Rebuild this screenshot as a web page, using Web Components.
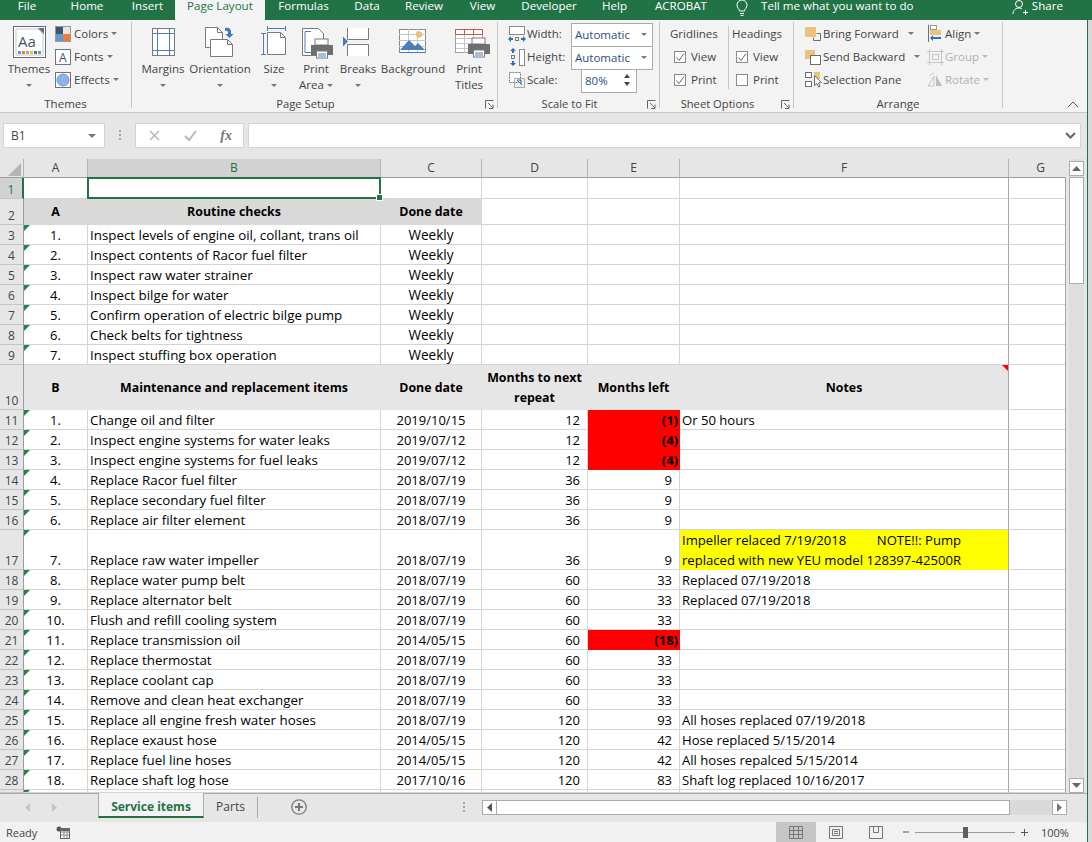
<!DOCTYPE html>
<html>
<head>
<meta charset="utf-8">
<title>Service items</title>
<style>
    html, body { margin: 0; height: 100%; overflow: hidden; background: #d9d9d9; }
    body { font-family: "Open Sans", "Noto Sans", sans-serif; }
    svg { display: block; }
</style>
</head>
<body>
<xl-window>
    <xl-title-bar slot="title"></xl-title-bar>
    <xl-ribbon>
        <xl-group label="Themes" style="width:131px">
            <xl-big label="Themes" caret style="width:48px;margin-left:5px">
                <svg slot="icon" width="48" height="36" viewBox="0 0 48 36">
                    <rect x="8.500" y="2.500" width="32" height="31" fill="#fff" stroke="#5f6b7a"/>
                    <path d="M11 5h22l5 5v21H11z" fill="#fff" stroke="#c8c8c8"/>
                    <path d="M33 4h6v6z" fill="#5f6b7a"/>
                    <text x="13" y="23" font-family="Open Sans" font-size="15" fill="#44546a">Aa</text>
                    <g shape-rendering="crispEdges"><rect x="13" y="27" width="3" height="3" fill="#5b9bd5"/><rect x="17" y="27" width="3" height="3" fill="#ed7d31"/><rect x="21" y="27" width="3" height="3" fill="#a5a5a5"/><rect x="25" y="27" width="3" height="3" fill="#ffc000"/><rect x="29" y="27" width="3" height="3" fill="#4472c4"/><rect x="33" y="27" width="3" height="3" fill="#70ad47"/></g>
                </svg>
            </xl-big>
            <div style="width:76px;margin-left:2px">
                <xl-small label="Colors" caret style="--icon-w:19px;--gap:3px">
                    <svg slot="icon" width="16" height="16" viewBox="0 0 16 16" shape-rendering="crispEdges"><rect x="0" y="0" width="16" height="16" fill="#9a9a9a"/><rect x="1" y="1" width="7" height="7" fill="#44546a"/><rect x="8" y="1" width="7" height="7" fill="#e7e6e6"/><rect x="1" y="8" width="7" height="7" fill="#5b9bd5"/><rect x="8" y="8" width="7" height="7" fill="#ed7d31"/></svg>
                </xl-small>
                <xl-small label="Fonts" caret style="--icon-w:19px;--gap:3px">
                    <svg slot="icon" width="16" height="16" viewBox="0 0 16 16"><rect x=".5" y=".5" width="15" height="15" fill="#fff" stroke="#6b7685"/><text x="4" y="13" font-family="Open Sans" font-size="12" fill="#2f5597">A</text><path d="M5 13l1-3" stroke="#ed7d31"/></svg>
                </xl-small>
                <xl-small label="Effects" caret style="--icon-w:19px;--gap:3px">
                    <svg slot="icon" width="16" height="16" viewBox="0 0 16 16"><rect x=".5" y=".5" width="15" height="15" fill="#fff" stroke="#6b7685"/><circle cx="8" cy="8" r="6" fill="#8fb2e3" stroke="#6e97d2"/></svg>
                </xl-small>
            </div>
        </xl-group>
        <xl-group label="Page Setup" launcher style="padding-left:7px;box-sizing:border-box;width:366px">
            <xl-big label="Margins" caret style="width:48px">
                <svg slot="icon" width="48" height="36" viewBox="0 0 48 36"><rect x="13.500" y="4.500" width="22" height="27" fill="#fff" stroke="#7a7a7a"/><path d="M18.500 5v26M30.500 5v26M14 9.500h21M14 26.500h21" stroke="#4a7ebb" fill="none"/></svg>
            </xl-big>
            <xl-big label="Orientation" caret style="width:66px">
                <svg slot="icon" width="66" height="36" viewBox="0 0 66 36"><path d="M18.500 3.500h12l5 5v15h-17z" fill="#fff" stroke="#7a7a7a"/><path d="M23.500 15.500h17l5 5v12h-22z" fill="#fff" stroke="#7a7a7a"/><path d="M40.500 15.500v5h5M30.500 3.500v5h5" fill="none" stroke="#7a7a7a"/><path d="M38 4c4-1 6 1 6 4v2h2.500l-4 4-4-4H41V8c0-1-1-1.500-3-1z" fill="#3f76b5"/></svg>
            </xl-big>
            <xl-big label="Size" caret style="width:42px">
                <svg slot="icon" width="42" height="36" viewBox="0 0 42 36"><path d="M14.500 8.500h13l5 5v17h-18z" fill="#fff" stroke="#7a7a7a"/><path d="M27.500 8.500v5h5" fill="none" stroke="#7a7a7a"/><path d="M14 4.500h19M14.500 2v5M32.500 2v5M10.500 9v22M8 9.500h5M8 30.500h5" stroke="#4a7ebb" fill="none"/></svg>
            </xl-big>
            <xl-big label="Print" label2="Area" caret2 style="width:42px">
                <svg slot="icon" width="42" height="36" viewBox="0 0 42 36"><path d="M7.500 4.500h16l5 5v22h-21z" fill="#fff" stroke="#7a7a7a"/><path d="M16 7.500h-6v21h6" fill="none" stroke="#4a7ebb"/><rect x="20" y="15" width="13" height="6" fill="#fff" stroke="#7a7a7a"/><path d="M16 21h21a1 1 0 0 1 1 1v9H33v3H21v-3h-5z" fill="#6e6e6e"/><rect x="21.500" y="27" width="11" height="7" fill="#fff" stroke="#7a7a7a"/><path d="M23 30h8M23 32h8" stroke="#4a7ebb"/></svg>
            </xl-big>
            <xl-big label="Breaks" caret style="width:42px">
                <svg slot="icon" width="42" height="36" viewBox="0 0 42 36"><path d="M10.500 4v11.500h21V4M10.500 32V20.500h21V32" fill="#fff" stroke="#7a7a7a"/><path d="M6 13l5 5-5 5z" fill="#4a7ebb" transform="translate(0 -.5)"/></svg>
            </xl-big>
            <xl-big label="Background" style="width:68px">
                <svg slot="icon" width="68" height="36" viewBox="0 0 68 36"><rect x="20.500" y="5.500" width="26" height="23" fill="#fff" stroke="#8a8a8a"/><path d="M20 10.500h27M20 16.500h27M20 22.500h27M29.500 5v24M38.500 5v24" stroke="#c6c6c6"/><circle cx="40" cy="10.500" r="3.200" fill="#e9c27e"/><path d="M21 26l9-10 6 6 3-3 7 7z" fill="#4a7ebb"/><path d="M21 28.500h25" stroke="#4a7ebb"/></svg>
            </xl-big>
            <xl-big label="Print" label2="Titles" style="width:44px">
                <svg slot="icon" width="44" height="36" viewBox="0 0 44 36"><rect x="8.500" y="5.500" width="27" height="23" fill="#fff" stroke="#a0a0a0"/><path d="M9 14.500h26M9 19.500h26M9 24.500h26M17.500 10v19M26.500 10v19" stroke="#c6c6c6"/><path d="M8.500 5.500h27v5h-27zM17.500 5.500v5M26.500 5.500v5" fill="none" stroke="#d0553a"/><rect x="25" y="14" width="13" height="6" fill="#fff" stroke="#7a7a7a"/><path d="M21 20h21a1 1 0 0 1 1 1v9h-5v3H26v-3h-5z" fill="#6e6e6e"/><rect x="26.500" y="26" width="11" height="7" fill="#fff" stroke="#7a7a7a"/><path d="M28 29h8M28 31h8" stroke="#4a7ebb"/></svg>
            </xl-big>
        </xl-group>
        <xl-group label="Scale to Fit" launcher style="padding-left:10px;box-sizing:border-box;width:162px">
            <div>
                <xl-fit-row label="Width:" value="Automatic" menu>
                    <svg slot="icon" width="18" height="18" viewBox="0 0 18 18"><rect x="1.500" y="1.500" width="15" height="8" fill="#fff" stroke="#8a8a8a"/><rect x="7.500" y="12.500" width="3" height="3" fill="none" stroke="#7a7a7a"/><path d="M0 14l3-3v2h2v2H3v2zM18 14l-3-3v2h-2v2h2v2z" fill="#2f6fb7"/></svg>
                </xl-fit-row>
                <xl-fit-row label="Height:" value="Automatic" menu>
                    <svg slot="icon" width="18" height="18" viewBox="0 0 18 18"><rect x="11.500" y="1.500" width="5" height="16" fill="#fff" stroke="#8a8a8a"/><path d="M5 0l3 3H6v2H4V3H2zM5 18l3-3H6v-2H4v2H2z" fill="#2f6fb7"/><rect x="3.500" y="7.500" width="3" height="3" fill="none" stroke="#7a7a7a"/></svg>
                </xl-fit-row>
                <xl-fit-row label="Scale:" value="80%" spin>
                    <svg slot="icon" width="18" height="18" viewBox="0 0 18 18"><rect x="1.500" y="1.500" width="11" height="10" fill="#fff" stroke="#7a7a7a" stroke-dasharray="2 1"/><path d="M6.500 7.500h10v9h-10z" fill="none" stroke="#a8a8a8"/><path d="M9 9h4v4M9 9l5 5" fill="none" stroke="#2f6fb7"/></svg>
                </xl-fit-row>
            </div>
        </xl-group>
        <xl-group label="Sheet Options" launcher style="box-sizing:border-box;width:134px;padding-left:10px">
            <xl-check-col title="Gridlines" style="width:58px;border-right:1px solid #c6c6c6;margin:4px 0 6px">
                <xl-check label="View" checked></xl-check>
                <xl-check label="Print" checked></xl-check>
            </xl-check-col>
            <xl-check-col title="Headings" style="width:60px;margin:4px 0 6px 3px">
                <xl-check label="View" checked></xl-check>
                <xl-check label="Print"></xl-check>
            </xl-check-col>
        </xl-group>
        <xl-group label="Arrange" style="box-sizing:border-box;width:209px;padding-left:11px">
            <div style="width:122px">
                <xl-small label="Bring Forward" caret style="--icon-w:18px;--gap:9px">
                    <svg slot="icon" width="16" height="16" viewBox="0 0 16 16"><rect x="0" y="1" width="11" height="10" fill="#eac27b"/><path d="M11.500 7.500h4v7h-7v-3" fill="none" stroke="#6e6e6e"/></svg>
                </xl-small>
                <xl-small label="Send Backward" caret style="--icon-w:18px;--gap:9px">
                    <svg slot="icon" width="16" height="16" viewBox="0 0 16 16"><rect x="0" y="1" width="10" height="9" fill="#eac27b"/><rect x="5.500" y="6.500" width="10" height="9" fill="#fff" stroke="#6e6e6e"/></svg>
                </xl-small>
                <xl-small label="Selection Pane" style="--icon-w:18px">
                    <svg slot="icon" width="17" height="17" viewBox="0 0 17 17"><rect x="9" y="1" width="6" height="7" fill="#eac27b"/><rect x=".5" y="1.500" width="6" height="5" fill="#fff" stroke="#6e6e6e"/><rect x=".5" y="10.500" width="6" height="5" fill="#fff" stroke="#6e6e6e"/><path d="M9.500 4.500v10l2.500-2 1.500 3.500 1.500-.5-1.500-3.500 3-.5z" fill="#fff" stroke="#6e6e6e"/></svg>
                </xl-small>
            </div>
            <div style="width:70px">
                <xl-small label="Align" caret style="--icon-w:18px;--gap:3px">
                    <svg slot="icon" width="16" height="17" viewBox="0 0 16 17"><path d="M1.500 0v17" stroke="#6e6e6e"/><rect x="3.500" y=".5" width="6" height="4" fill="#fff" stroke="#9a9a9a"/><rect x="3" y="5" width="11" height="5" fill="#eac27b"/><path d="M3 13l3-3v2h8v2H6v2z" fill="#2f6fb7"/></svg>
                </xl-small>
                <xl-small label="Group" caret disabled style="--icon-w:18px;--gap:3px">
                    <svg slot="icon" width="17" height="16" viewBox="0 0 17 16"><g fill="none" stroke="#c4c4c4"><rect x="2.500" y="2.500" width="12" height="11"/><rect x="5.500" y="5.500" width="6" height="5"/><path d="M0 2.500h4M2.500 0v4M13 2.500h4M14.500 0v4M0 13.500h4M2.500 12v4M13 13.500h4M14.500 12v4"/></g></svg>
                </xl-small>
                <xl-small label="Rotate" caret disabled style="--icon-w:18px;--gap:3px">
                    <svg slot="icon" width="16" height="16" viewBox="0 0 16 16"><path d="M1 14l6-10v10z" fill="none" stroke="#c4c4c4"/><path d="M9 3v11h6z" fill="#bdbdbd"/><path d="M3 4c1-2 2-2 4-3" fill="none" stroke="#c4c4c4"/></svg>
                </xl-small>
            </div>
        </xl-group>
    </xl-ribbon>
    <xl-formula-bar cell="B1"></xl-formula-bar>
    <xl-sheet></xl-sheet>
    <xl-sheet-tabs></xl-sheet-tabs>
    <xl-status-bar></xl-status-bar>
</xl-window>

<script>
class XlWindow extends HTMLElement {
    constructor() {
        super();
        this.attachShadow({ mode: 'open' });
        this.shadowRoot.innerHTML = `
            <style>
                :host { display: block; width: 1092px; height: 842px; overflow: hidden; color: #444; }
                .main { width: 1087px; border-right: 1px solid #217346; background: #f1f1f1; height: 822px; }
            </style>
            <slot name="title"></slot>
            <div class="main"><slot></slot></div>
        `;
    }
}
customElements.define('xl-window', XlWindow);

class XlTitleBar extends HTMLElement {
    constructor() {
        super();
        this.attachShadow({ mode: 'open' });
        const tabs = [['File', 54], ['Home', 66], ['Insert', 55], ['Page Layout', 90], ['Formulas', 77], ['Data', 50],
            ['Review', 64], ['View', 53], ['Developer', 80], ['Help', 51], ['ACROBAT', 82]];
        const tabHtml = tabs.map(([name, w]) =>
            `<span class="tab ${name === 'Page Layout' ? 'active' : ''}" style="width:${w}px">${name}</span>`).join('');
        this.shadowRoot.innerHTML = `
            <style>
                :host { display: flex; height: 20px; background: #217346; color: #fff; font-size: 11.6px; line-height: 11px; overflow: hidden; }
                .tab { display: block; text-align: center; flex: none; }
                .active { background: #f3f3f3; color: #217346; height: 20px; }
                .bulb { margin: 0 0 0 13px; flex: none; }
                .tell { margin-left: 12px; flex: none; }
                .spacer { flex: 1; }
                .share { margin-right: 29px; margin-left: 4px; }
            </style>
            ${tabHtml}
            <svg class="bulb" width="14" height="16" viewBox="0 0 14 16" fill="none" stroke="#fff"><path d="M4.500 11c0-2-2.500-3-2.500-6a5 5 0 0 1 10 0c0 3-2.500 4-2.500 6zM5 13.500h4M5.500 15.500h3"/></svg>
            <span class="tell">Tell me what you want to do</span>
            <span class="spacer"></span>
            <svg width="16" height="16" viewBox="0 0 16 16" fill="none" stroke="#fff" style="flex:none"><circle cx="7" cy="4" r="3.500"/><path d="M1 14c0-4 3-6 6-6 1 0 2 .2 3 1M11 12.500h5M13.500 10v5"/></svg>
            <span class="share">Share</span>
        `;
    }
}
customElements.define('xl-title-bar', XlTitleBar);

class XlRibbon extends HTMLElement {
    constructor() {
        super();
        this.attachShadow({ mode: 'open' });
        this.shadowRoot.innerHTML = `
            <style>
                :host { display: flex; position: relative; height: 93px; box-sizing: border-box; padding-top: 2px; background: #f3f3f3;
                    border-bottom: 1px solid #c8c8c8; font-size: 11.5px; color: #444; }
                .collapse { position: absolute; left: 1067px; top: 81px; }
            </style>
            <slot></slot>
            <svg class="collapse" width="12" height="7" viewBox="0 0 12 7" fill="none" stroke="#555"><path d="M1 6l5-5 5 5"/></svg>
        `;
    }
}
customElements.define('xl-ribbon', XlRibbon);

class XlGroup extends HTMLElement {
    constructor() {
        super();
        this.attachShadow({ mode: 'open' });
        const launcher = this.hasAttribute('launcher') ? `
            <svg class="launcher" width="9" height="9" viewBox="0 0 9 9" fill="none" stroke="#666"><path d="M.5 8.500v-8h8M3 3l5 5M8 4.500v4H4"/></svg>` : '';
        this.shadowRoot.innerHTML = `
            <style>
                :host { display: block; position: relative; flex: none; height: 86px; border-right: 1px solid #c6c6c6; }
                :host([launcher]) .label { right: 18px; font-size: 11.2px; }
                .body { display: flex; height: 73px; }
                .label { position: absolute; left: 0; right: 0; top: 74px; text-align: center; line-height: 16px; }
                .launcher { position: absolute; right: 3px; top: 78px; }
            </style>
            <div class="body"><slot></slot></div>
            <div class="label">${this.getAttribute('label')}</div>
            ${launcher}
        `;
    }
}
customElements.define('xl-group', XlGroup);

class XlBig extends HTMLElement {
    constructor() {
        super();
        this.attachShadow({ mode: 'open' });
        const label2 = this.getAttribute('label2');
        let second = '';
        if (label2) second = `<div class="line">${label2}${this.hasAttribute('caret2') ? '<i class="caret side"></i>' : ''}</div>`;
        else if (this.hasAttribute('caret')) second = '<div class="line"><i class="caret"></i></div>';
        this.shadowRoot.innerHTML = `
            <style>
                :host { display: block; flex: none; text-align: center; white-space: nowrap; }
                .icon { height: 36px; margin: 2px 0 1px; }
                .line { height: 16px; line-height: 16px; }
                .caret { display: inline-block; width: 0; height: 0; border: 3px solid transparent; border-top: 3px solid #777; border-bottom: 0; vertical-align: middle; }
                .side { margin-left: 3px; }
            </style>
            <div class="icon"><slot name="icon"></slot></div>
            <div class="line">${this.getAttribute('label')}</div>
            ${second}
        `;
    }
}
customElements.define('xl-big', XlBig);

class XlSmall extends HTMLElement {
    constructor() {
        super();
        this.attachShadow({ mode: 'open' });
        const caret = this.hasAttribute('caret') ? '<i class="caret"></i>' : '';
        this.shadowRoot.innerHTML = `
            <style>
                :host { display: flex; align-items: center; height: 23px; white-space: nowrap; }
                :host([disabled]) { color: #b1b1b1; }
                .icon { width: var(--icon-w, 18px); flex: none; }
                .caret { width: 0; height: 0; margin-left: var(--gap, 3px); border: 3px solid transparent; border-top: 3px solid #777; border-bottom: 0; }
                :host([disabled]) .caret { border-top-color: #bbb; }
            </style>
            <div class="icon"><slot name="icon"></slot></div>
            <span>${this.getAttribute('label')}</span>
            ${caret}
        `;
    }
}
customElements.define('xl-small', XlSmall);

class XlFitRow extends HTMLElement {
    constructor() {
        super();
        this.attachShadow({ mode: 'open' });
        const spin = this.hasAttribute('spin');
        const right = spin
            ? '<svg class="spin" width="8" height="14" viewBox="0 0 8 14" fill="#444"><path d="M4 1l3 4H1zM4 13l3-4H1z"/></svg>'
            : '<i class="caret"></i>';
        this.shadowRoot.innerHTML = `
            <style>
                :host { display: flex; align-items: center; height: 23px; white-space: nowrap; }
                .icon { width: 19px; flex: none; }
                .name { width: 44px; flex: none; }
                .box { display: flex; align-items: center; justify-content: space-between; box-sizing: border-box; height: 24px; width: 82px;
                    padding: 0 5px 2px 3px; align-self: flex-start; margin-top: 1px; background: #fff; border: 1px solid #ababab; color: #2b4f7d; }
                .spinbox { width: 56px; margin-left: 10px; }
                .caret { width: 0; height: 0; border: 3px solid transparent; border-top: 3px solid #777; border-bottom: 0; }
            </style>
            <div class="icon"><slot name="icon"></slot></div>
            <span class="name">${this.getAttribute('label')}</span>
            <div class="box ${spin ? 'spinbox' : ''}"><span>${this.getAttribute('value')}</span>${right}</div>
        `;
    }
}
customElements.define('xl-fit-row', XlFitRow);

class XlCheckCol extends HTMLElement {
    constructor() {
        super();
        this.attachShadow({ mode: 'open' });
        this.shadowRoot.innerHTML = `
            <style>
                :host { display: block; flex: none; }
                .head { height: 23px; line-height: 23px; margin-top: -4px; }
            </style>
            <div class="head">${this.getAttribute('title')}</div>
            <slot></slot>
        `;
        this.removeAttribute('title');
    }
}
customElements.define('xl-check-col', XlCheckCol);

class XlCheck extends HTMLElement {
    constructor() {
        super();
        this.attachShadow({ mode: 'open' });
        const tick = this.hasAttribute('checked') ? '<path d="M2.500 6.500l2.500 3 5-7" fill="none" stroke="#666"/>' : '';
        this.shadowRoot.innerHTML = `
            <style>
                :host { display: flex; align-items: center; height: 23px; padding-left: 4px; }
                svg { display: block; margin-right: 5px; flex: none; }
            </style>
            <svg width="12" height="12" viewBox="0 0 12 12"><rect x=".5" y=".5" width="11" height="11" fill="#fff" stroke="#8a8a8a"/>${tick}</svg>
            <span>${this.getAttribute('label')}</span>
        `;
    }
}
customElements.define('xl-check', XlCheck);

class XlFormulaBar extends HTMLElement {
    constructor() {
        super();
        this.attachShadow({ mode: 'open' });
        this.shadowRoot.innerHTML = `
            <style>
                :host { display: flex; align-items: flex-start; height: 46px; box-sizing: border-box; padding: 10px 0 0 3px; background: #e6e6e6; font-size: 12px; color: #444; }
                .box { box-sizing: border-box; height: 25px; background: #fff; border: 1px solid #d4d4d4; display: flex; align-items: center; }
                .name { width: 102px; padding: 0 8px 0 7px; justify-content: space-between; }
                .caret { width: 0; height: 0; border: 4px solid transparent; border-top: 4px solid #777; border-bottom: 0; }
                .dots { width: 30px; display: flex; flex-direction: column; align-items: center; gap: 2px; padding-top: 7px; }
                .dots i { width: 2px; height: 2px; background: #a6a6a6; }
                .btns { width: 109px; justify-content: space-between; padding: 0 11px 0 13px; }
                .fx { font: italic bold 14px "Liberation Serif", serif; color: #777; }
                .input { width: 833px; margin-left: 4px; justify-content: flex-end; padding-right: 4px; }
            </style>
            <div class="box name"><span>${this.getAttribute('cell')}</span><i class="caret"></i></div>
            <div class="dots"><i></i><i></i><i></i></div>
            <div class="box btns">
                <svg width="11" height="11" viewBox="0 0 11 11" stroke="#b8b8b8" stroke-width="1.500" fill="none"><path d="M1 1l9 9M10 1l-9 9"/></svg>
                <svg width="13" height="11" viewBox="0 0 13 11" stroke="#b8b8b8" stroke-width="2" fill="none"><path d="M1 6l4 4 7-9"/></svg>
                <span class="fx">fx</span>
            </div>
            <div class="box input">
                <svg width="11" height="7" viewBox="0 0 11 7" fill="none" stroke="#666" stroke-width="2"><path d="M1 1l4.500 4.500L10 1"/></svg>
            </div>
        `;
    }
}
customElements.define('xl-formula-bar', XlFormulaBar);

const COLUMNS = ['A', 'B', 'C', 'D', 'E', 'F', 'G'];
const ROW_HEIGHTS = [21, 26, 20, 20, 20, 20, 20, 20, 20, 45, 20, 20, 20, 20, 20, 20, 40,
    20, 20, 20, 20, 20, 20, 20, 20, 20, 20, 20, 3];

// number, item, done date, months to repeat, months left, notes
const ROUTINE = [
    ['1.', 'Inspect levels of engine oil, collant, trans oil'],
    ['2.', 'Inspect contents of Racor fuel filter'],
    ['3.', 'Inspect raw water strainer'],
    ['4.', 'Inspect bilge for water'],
    ['5.', 'Confirm operation of electric bilge pump'],
    ['6.', 'Check belts for tightness'],
    ['7.', 'Inspect stuffing box operation']
];
const ITEMS = [
    ['1.', 'Change oil and filter', '2019/10/15', 12, '(1)', 'Or 50 hours'],
    ['2.', 'Inspect engine systems for water leaks', '2019/07/12', 12, '(4)', ''],
    ['3.', 'Inspect engine systems for fuel leaks', '2019/07/12', 12, '(4)', ''],
    ['4.', 'Replace Racor fuel filter', '2018/07/19', 36, 9, ''],
    ['5.', 'Replace secondary fuel filter', '2018/07/19', 36, 9, ''],
    ['6.', 'Replace air filter element', '2018/07/19', 36, 9, ''],
    ['7.', 'Replace raw water impeller', '2018/07/19', 36, 9, 'Impeller relaced 7/19/2018         NOTE!!: Pump replaced with new YEU model 128397-42500R'],
    ['8.', 'Replace water pump belt', '2018/07/19', 60, 33, 'Replaced 07/19/2018'],
    ['9.', 'Replace alternator belt', '2018/07/19', 60, 33, 'Replaced 07/19/2018'],
    ['10.', 'Flush and refill cooling system', '2018/07/19', 60, 33, ''],
    ['11.', 'Replace transmission oil', '2014/05/15', 60, '(18)', ''],
    ['12.', 'Replace thermostat', '2018/07/19', 60, 33, ''],
    ['13.', 'Replace coolant cap', '2018/07/19', 60, 33, ''],
    ['14.', 'Remove and clean heat exchanger', '2018/07/19', 60, 33, ''],
    ['15.', 'Replace all engine fresh water hoses', '2018/07/19', 120, 93, 'All hoses replaced 07/19/2018'],
    ['16.', 'Replace exaust hose', '2014/05/15', 120, 42, 'Hose replaced 5/15/2014'],
    ['17.', 'Replace fuel line hoses', '2014/05/15', 120, 42, 'All hoses repalced 5/15/2014'],
    ['18.', 'Replace shaft log hose', '2017/10/16', 120, 83, 'Shaft log replaced 10/16/2017']
];

class XlSheet extends HTMLElement {
    constructor() {
        super();
        this.attachShadow({ mode: 'open' });
        this.shadowRoot.innerHTML = `
            <style>
                :host { display: flex; height: 634px; background: #e6e6e6; font-size: 13px; color: #000; }
                .grid { position: relative; flex: none; width: 1066px; height: 634px; overflow: hidden; display: grid; background: #fff;
                    grid-template-columns: 24px 64px 293px 101px 106px 92px 329px 64px;
                    grid-template-rows: 19px ${ROW_HEIGHTS.map(h => h + 'px').join(' ')}; }
                .grid::after { content: ""; position: absolute; left: 1065px; top: 19px; bottom: 0; width: 1px; background: #a6a6a6; }
                .c { position: relative; box-sizing: border-box; display: flex; align-items: flex-end; min-width: 0; overflow: hidden;
                    border-right: 1px solid #d4d4d4; border-bottom: 1px solid #d4d4d4; line-height: 20px; white-space: pre-wrap; }
                .c > span { display: block; width: 100%; margin-bottom: -1px; }
                .fl { padding-left: 2px; }
                .item { font-size: 13.35px; }
                .wk { font-size: 13.6px; }
                .nt { font-size: 13.1px; }
                .ct { text-align: center; }
                .rt { text-align: right; padding-right: 7px; }
                .neg { padding-right: 1px; font-weight: bold; }
                .mid { align-items: center; font-weight: bold; font-size: 12.4px; }
                .f2 { background: #d9d9d9; border-color: #d9d9d9; }
                .f10 { background: #e7e6e6; border-color: #e7e6e6; }
                .red { background: #ff0000; border-color: #ff0000; }
                .yel { background: #ffff00; border-color: #ffff00; }
                .lastf { border-right-color: #a6a6a6; }
                .tri::before { content: ""; position: absolute; left: 0; top: 0; border: 3px solid transparent; border-left: 3px solid #1e8449; border-top: 3px solid #1e8449; }
                .note::after { content: ""; position: absolute; right: 0; top: 0; border: 3px solid transparent; border-right: 3px solid #ff0000; border-top: 3px solid #ff0000; }
                .hd { background: #e6e6e6; color: #444; font-size: 12px; border-right-color: #b4b4b4; border-bottom-color: #9c9c9c; justify-content: center; align-items: center; line-height: 16px; }
                .hd > span { margin: 0; text-align: center; }
                .rh { align-items: flex-end; border-right-color: #9c9c9c; border-bottom-color: #c4c4c4; }
                .rh > span { line-height: 16px; }
                .sel { background: #d2d2d2; color: #217346; }
                .rowsel { border-right: 2px solid #217346; }
                .corner { position: relative; }
                .corner svg { position: absolute; left: 8px; top: 4px; }
                .cursor { position: absolute; left: 87px; top: 18px; width: 294px; height: 22px; box-sizing: border-box; border: 2px solid #217346; }
                .cursor i { position: absolute; right: -4px; bottom: -4px; width: 5px; height: 5px; background: #217346; border: 1px solid #fff; }
                .scroll { flex: none; width: 15px; margin-left: 3px; padding-top: 2px; display: flex; flex-direction: column; background: #dedede; height: 634px; box-sizing: border-box; }
                .btn { height: 15px; box-sizing: border-box; background: #fff; border: 1px solid #ababab; display: flex; align-items: center; justify-content: center; flex: none; }
                .thumb { height: 107px; box-sizing: border-box; background: #fff; border: 1px solid #ababab; flex: none; margin-top: 1px; }
                .track { flex: 1; }
            </style>
            <div class="grid">${this.renderCells()}<div class="cursor"><i></i></div></div>
            <div class="scroll">
                <div class="btn"><svg width="9" height="5" viewBox="0 0 9 5" fill="#666"><path d="M4.500 0L9 5H0z"/></svg></div>
                <div class="thumb"></div>
                <div class="track"></div>
                <div class="btn"><svg width="9" height="5" viewBox="0 0 9 5" fill="#666"><path d="M4.500 5L9 0H0z"/></svg></div>
            </div>
        `;
    }

    cell(text, cls) {
        return `<div class="c ${cls}"><span>${text}</span></div>`;
    }

    renderRow(rowNum, values) {
        const [a, b, c, d, e, f] = values;
        let html = this.cell(a, 'ct tri');
        html += this.cell(b || '', 'fl item');
        html += this.cell(c || '', c === 'Weekly' ? 'ct wk' : 'ct');
        html += this.cell(d === undefined ? '' : d, 'rt');
        const neg = typeof e === 'string';
        html += this.cell(e === undefined ? '' : e, neg ? 'rt neg red' : 'rt');
        html += this.cell(f || '', 'fl nt lastf' + (rowNum === 17 ? ' yel' : ''));
        html += this.cell('', '');
        return html;
    }

    renderCells() {
        const corner = '<div class="c hd corner"><svg width="13" height="13" viewBox="0 0 13 13"><path d="M13 0v13H0z" fill="#b4b4b4"/></svg></div>';
        let html = corner + COLUMNS.map(col => this.cell(col, 'hd' + (col === 'B' ? ' sel' : ''))).join('');

        const rowHead = (n) => this.cell(n, 'hd rh' + (n === 1 ? ' sel rowsel' : ''));

        html += rowHead(1) + this.cell('', '') + this.cell('', '') + this.cell('', '') + this.cell('', '') + this.cell('', '') + this.cell('', 'lastf') + this.cell('', '');

        html += rowHead(2) + this.cell('A', 'ct mid f2') + this.cell('Routine checks', 'ct mid f2') + this.cell('Done date', 'ct mid f2')
            + this.cell('', '') + this.cell('', '') + this.cell('', 'lastf') + this.cell('', '');

        ROUTINE.forEach((row, i) => {
            html += rowHead(i + 3) + this.renderRow(i + 3, [row[0], row[1], 'Weekly']);
        });

        html += rowHead(10);
        ['B', 'Maintenance and replacement items', 'Done date', 'Months to next repeat', 'Months left', 'Notes'].forEach((t, i) => {
            html += this.cell(t, 'ct mid f10' + (i === 5 ? ' lastf note' : ''));
        });
        html += this.cell('', '');

        ITEMS.forEach((row, i) => {
            html += rowHead(i + 11) + this.renderRow(i + 11, row);
        });

        html += this.cell('', 'hd rh') + this.cell('', 'tri') + this.cell('', '') + this.cell('', '') + this.cell('', '') + this.cell('', '') + this.cell('', 'lastf') + this.cell('', '');
        return html;
    }
}
customElements.define('xl-sheet', XlSheet);

class XlSheetTabs extends HTMLElement {
    constructor() {
        super();
        this.attachShadow({ mode: 'open' });
        this.shadowRoot.innerHTML = `
            <style>
                :host { display: flex; height: 29px; box-sizing: border-box; background: #e6e6e6; border-top: 1px solid #ababab; font-size: 12px; color: #444; }
                .nav { width: 98px; flex: none; display: flex; align-items: center; gap: 22px; padding: 0 0 1px 25px; box-sizing: border-box; }
                .tab { height: 24px; box-sizing: border-box; display: flex; align-items: center; justify-content: center; flex: none; margin-top: -1px; }
                .on { width: 106px; background: #f3f3f3; color: #217346; font-weight: bold; border-left: 1px solid #ababab; border-right: 1px solid #ababab; border-bottom: 2px solid #217346; height: 25px; padding-top: 3px; }
                .off { width: 54px; border-right: 1px solid #ababab; margin-top: 3px; height: 21px; padding-bottom: 2px; }
                .plus { margin: 5px 0 0 33px; flex: none; }
                .dots { margin-left: 149px; width: 16px; display: flex; flex-direction: column; align-items: center; gap: 2px; padding-top: 8px; flex: none; }
                .dots i { width: 2px; height: 2px; background: #a6a6a6; }
                .bar { display: flex; margin: 6px 0 0 10px; height: 15px; flex: none; }
                .btn { width: 15px; box-sizing: border-box; background: #fff; border: 1px solid #ababab; display: flex; align-items: center; justify-content: center; }
                .thumb { width: 513px; box-sizing: border-box; background: #fff; border: 1px solid #ababab; border-left: 0; }
                .track { width: 42px; background: #d9d9d9; }
            </style>
            <div class="nav">
                <svg width="5" height="9" viewBox="0 0 5 9" fill="#c4c4c4"><path d="M5 0v9L0 4.500z"/></svg>
                <svg width="5" height="9" viewBox="0 0 5 9" fill="#c4c4c4"><path d="M0 0v9l5-4.500z"/></svg>
            </div>
            <div class="tab on">Service items</div>
            <div class="tab off">Parts</div>
            <svg class="plus" width="16" height="16" viewBox="0 0 16 16" fill="none" stroke="#777" stroke-width="1.300"><circle cx="8" cy="8" r="7.200"/><path d="M8 4v8M4 8h8" stroke-width="2"/></svg>
            <div class="dots"><i></i><i></i><i></i></div>
            <div class="bar">
                <div class="btn"><svg width="5" height="9" viewBox="0 0 5 9" fill="#555"><path d="M5 0v9L0 4.500z"/></svg></div>
                <div class="thumb"></div>
                <div class="track"></div>
                <div class="btn"><svg width="5" height="9" viewBox="0 0 5 9" fill="#777"><path d="M0 0v9l5-4.500z"/></svg></div>
            </div>
        `;
    }
}
customElements.define('xl-sheet-tabs', XlSheetTabs);

class XlStatusBar extends HTMLElement {
    constructor() {
        super();
        this.attachShadow({ mode: 'open' });
        this.shadowRoot.innerHTML = `
            <style>
                :host { display: flex; align-items: center; height: 20px; background: #f1f1f1; font-size: 11px; color: #444; }
                .ready { margin-left: 6px; width: 50px; flex: none; }
                .view { width: 40px; height: 20px; display: flex; align-items: center; justify-content: center; flex: none; }
                .cur { background: #c6c6c6; margin-left: 706px; }
                .zoom { display: flex; align-items: center; flex: none; margin-left: 7px; }
                .line { position: relative; width: 100px; height: 1px; background: #9a9a9a; margin: 0 6px; }
                .line i { position: absolute; left: 48px; top: -5px; width: 5px; height: 11px; background: #5f5f5f; }
                .pct { margin-left: 13px; flex: none; }
            </style>
            <span class="ready">Ready</span>
            <svg width="14" height="13" viewBox="0 0 14 13" style="flex:none"><circle cx="3" cy="3" r="2.500" fill="#555"/><rect x="4.500" y="2.500" width="9" height="10" fill="#fff" stroke="#666"/><path d="M5 6h8M5 9h8M8 3v9M11 3v9" stroke="#888"/><rect x="5" y="3" width="8" height="2" fill="#666"/></svg>
            <div class="view cur"><svg width="14" height="13" viewBox="0 0 14 13" fill="none" stroke="#777"><path d="M.5.500h13v12H.5zM.5 4.500h13M.5 8.500h13M4.500.500v12M9.500.500v12"/></svg></div>
            <div class="view"><svg width="14" height="13" viewBox="0 0 14 13" fill="none" stroke="#777"><path d="M.5.500h13v12H.5z"/><path d="M3.500 3.500h7v6h-7zM5 5.500h4M5 7.500h4" stroke="#777"/></svg></div>
            <div class="view"><svg width="14" height="13" viewBox="0 0 14 13" fill="none" stroke="#777"><path d="M.5.500h13v12H.5zM4.500.500v6h5v-6"/></svg></div>
            <div class="zoom">
                <svg width="6" height="2" viewBox="0 0 6 2"><rect width="6" height="1" y="0.500" fill="#555"/></svg>
                <div class="line"><i></i></div>
                <svg width="7" height="7" viewBox="0 0 7 7" stroke="#555" fill="none"><path d="M0 3.500h7M3.500 0v7"/></svg>
            </div>
            <span class="pct">100%</span>
        `;
    }
}
customElements.define('xl-status-bar', XlStatusBar);
</script>
</body>
</html>
